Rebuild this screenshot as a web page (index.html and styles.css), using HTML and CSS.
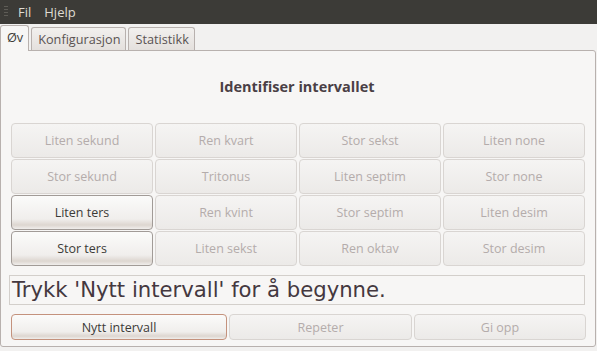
FILE: index.html
```html
<!DOCTYPE html>
<html lang="nb">
<head>
    <meta charset="UTF-8">
    <title>Intervall</title>
    <link rel="stylesheet" href="styles.css">
</head>
<body>
    <div class="menubar">
        <span class="grip"></span>
        <span class="menu-item">Fil</span>
        <span class="menu-item">Hjelp</span>
    </div>
    <div class="notebook">
        <div class="tabs">
            <div class="tab active">Øv</div>
            <div class="tab">Konfigurasjon</div>
            <div class="tab">Statistikk</div>
        </div>
        <div class="page">
            <h1 class="title">Identifiser intervallet</h1>
            <div class="grid">
                <button disabled>Liten sekund</button>
                <button disabled>Ren kvart</button>
                <button disabled>Stor sekst</button>
                <button disabled>Liten none</button>
                <button disabled>Stor sekund</button>
                <button disabled>Tritonus</button>
                <button disabled>Liten septim</button>
                <button disabled>Stor none</button>
                <button>Liten ters</button>
                <button disabled>Ren kvint</button>
                <button disabled>Stor septim</button>
                <button disabled>Liten desim</button>
                <button>Stor ters</button>
                <button disabled>Liten sekst</button>
                <button disabled>Ren oktav</button>
                <button disabled>Stor desim</button>
            </div>
            <div class="status">Trykk 'Nytt intervall' for å begynne.</div>
            <div class="actions">
                <button class="focus">Nytt intervall</button>
                <button disabled>Repeter</button>
                <button disabled>Gi opp</button>
            </div>
        </div>
    </div>
</body>
</html>
```

FILE: styles.css
```css
* {
    box-sizing: border-box;
    margin: 0;
    padding: 0;
}

body {
    width: 597px;
    height: 351px;
    overflow: hidden;
    background-color: #f2f1f0;
    font-family: "Open Sans", sans-serif;
    font-size: 12px;
    color: #3c3b37;
}

.menubar {
    height: 24px;
    background-color: #3c3b37;
    display: flex;
    align-items: center;
    padding-left: 4px;
}

.grip {
    width: 4px;
    height: 12px;
    margin-right: 10px;
    background: repeating-linear-gradient(#5e5c56 0 1px, transparent 1px 3px);
}

.menu-item {
    color: #dfdbd2;
    font-size: 13px;
    margin-right: 13px;
}

.notebook {
    padding: 1px 1px 0 0;
}

.tabs {
    display: flex;
    gap: 2px;
    height: 25px;
    align-items: flex-end;
    position: relative;
    z-index: 1;
}

.tab {
    height: 23px;
    padding: 0 5px 0 6px;
    border: 1px solid #b8b1ae;
    border-bottom: none;
    border-radius: 3px 3px 0 0;
    background: linear-gradient(#f2f0ee, #e4e0dd);
    color: #5a5353;
    font-size: 12.7px;
    line-height: 22px;
}

.tab.active {
    background: #f7f6f5;
    color: #3c3b37;
    margin-bottom: -1px;
    height: 26px;
}

.page {
    height: 297px;
    border: 1px solid #b8b1ae;
    border-radius: 0 3px 3px 3px;
    background-color: #f7f6f5;
    padding: 0 10px 0 8px;
    display: flex;
    flex-direction: column;
}

.title {
    font-size: 14.5px;
    font-weight: bold;
    text-align: center;
    color: #4a3f45;
    margin-top: 24px;
    height: 24px;
    line-height: 24px;
}

.grid {
    display: grid;
    grid-template-columns: repeat(4, 142px);
    grid-auto-rows: 35px;
    gap: 1px 2px;
    margin: 24px 0 0 2px;
}

button {
    font-family: "Open Sans", sans-serif;
    font-size: 12.5px;
    color: #3c3b37;
    border: 1px solid #a19b97;
    border-radius: 4px;
    background: linear-gradient(#fbfbfa 0%, #f0eeec 70%, #ddd6d0 88%, #f0eeec 100%);
}

button:disabled {
    color: #b4acab;
    border-color: #d9d5d2;
    background: linear-gradient(#f5f4f3, #eceae8);
}

.status {
    margin-top: 9px;
    height: 30px;
    border: 1px solid #d3cfcb;
    background-color: #f7f6f5;
    font-family: "DejaVu Sans", sans-serif;
    font-size: 21.2px;
    line-height: 28px;
    padding-left: 2px;
    color: #44383f;
}

.actions {
    display: grid;
    grid-template-columns: 216px 183px 172px;
    gap: 2px;
    height: 26px;
    margin: 9px 0 0 2px;
}

.actions button.focus {
    border-color: #c4927d;
}
```
